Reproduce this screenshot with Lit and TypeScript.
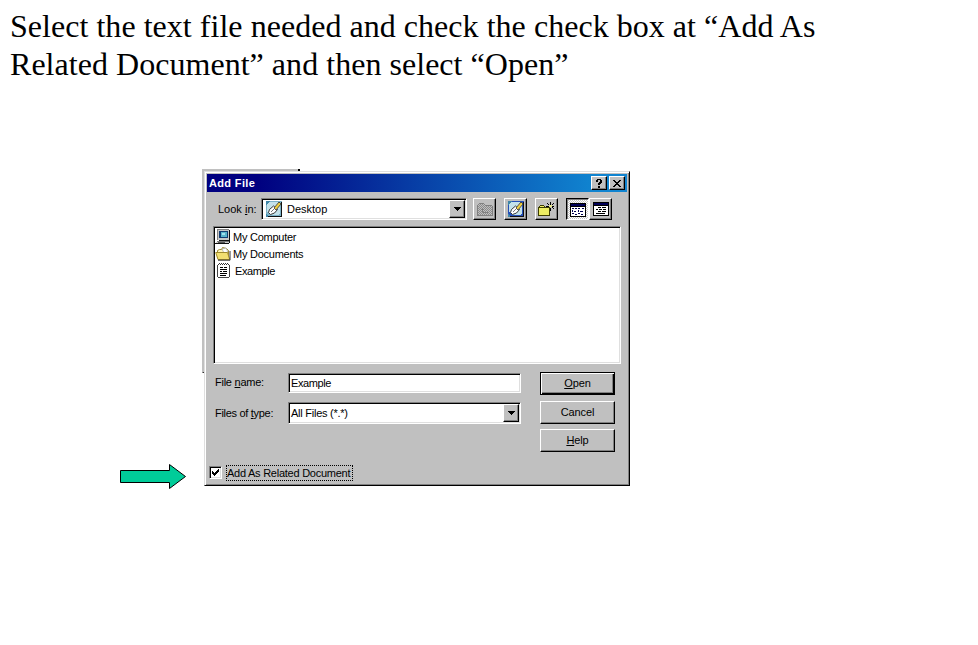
import { LitElement, html, css, svg } from "lit";
import { customElement } from "lit/decorators.js";

const icon = (w: number, h: number, body: unknown) =>
  html`<svg width=${w} height=${h} viewBox="0 0 ${w} ${h}" shape-rendering="crispEdges">${body}</svg>`;

const downArrow = () => icon(7, 4, svg`<path d="M0 0h7v1h-1v1h-1v1h-1v1h-1v-1h-1v-1h-1v-1h-1z"/>`);

const desktopIcon = (base: string) => icon(16, 16, svg`
  <rect width="16" height="16" fill=${base}/>
  <path d="M3 1h8l3 2v9l-2 2H4l-3-3V4z" fill="#c4e2ea"/>
  <path d="M0 0h4L0 4zM0 16v-3l3 3z" fill="#3f86a8"/>
  <g shape-rendering="auto">
    <path d="M2.5 11.5l1-3 4-3.500 4 3.500-3 3.500-4 1.500z" fill="#fff" stroke="#222" stroke-width=".9"/>
    <path d="M8 7l5-6 2 2-5 6z" fill="#f0d040" stroke="#333" stroke-width=".8"/>
    <path d="M5 11l4-4" stroke="#555" stroke-width=".8"/>
  </g>
  <path d="M15 1h1v15H2v-1h13z" fill="#111"/>`);

const computerIcon = () => icon(16, 16, svg`
  <path d="M2 0h12v11H2z" fill="#c8c8c8"/><path d="M14 1h1v11H4v-1h10z" fill="#111"/>
  <path d="M2 0h12v1H3v10H2z" fill="#808080"/>
  <path d="M4 2h9v7H4z" fill="#123b70"/><path d="M6 3h6v5H6z" fill="#58b4cc"/><path d="M7 4h3v2H7z" fill="#a4e0ee"/>
  <path d="M2 12h12v2H1v-1h1z" fill="#d0d0d0"/><path d="M2 12h12v1H2z" fill="#777"/>
  <path d="M0 14h14v1H0zM14 12h1v2h-1z" fill="#111"/><path d="M3 13h7v1H3z" fill="#555"/>`);

const folderIcon = () => icon(16, 16, svg`<g shape-rendering="auto">
  <path d="M2.500 12V4.500l2-1h2l1-2 4 1 2 2V12z" fill="#fff6b8" stroke="#9b8730"/>
  <path d="M7 3l4-1 2 4-4 1z" fill="#fff" stroke="#999" stroke-width=".6"/>
  <path d="M.7 6.500h11.800l2.200 7H3z" fill="#f2df70" stroke="#a18b2d"/>
  <path d="M3 14.200h12V5" fill="none" stroke="#333"/></g>`);

const noteIcon = () => icon(13, 16, svg`
  <path d="M1 2h11v12H1z" fill="#fff"/><path d="M0 2h1v12H0zM1 14h11v1H1zM12 2h1v12h-1z" fill="#444"/>
  <path d="M1 1h1v1H1zM3 1h1v1H3zM5 1h1v1H5zM7 1h1v1H7zM9 1h1v1H9zM11 1h1v1h-1zM2 0h1v1H2zM4 0h1v1H4zM6 0h1v1H6zM8 0h1v1H8zM10 0h1v1h-1z" fill="#333"/>
  <path d="M3 4h3v1H3zM7 4h3v1H7zM3 6h7v1H3zM3 8h2v1H3zM6 8h4v1H6zM3 10h7v1H3zM3 12h6v1H3z"/>`);

const upIcon = () => icon(16, 13, svg`
  <defs><pattern id="d" width="2" height="2" patternUnits="userSpaceOnUse"><path d="M0 0h1v1H0zM1 1h1v1H1z" fill="#8a8a8a"/></pattern></defs>
  <path d="M1 2h1V1h5v1h1v1h7v9H1z" fill="url(#d)"/>
  <path d="M2 0h5v1H2zM1 1h1v1H1zM7 1h1v1H7zM8 2h7v1H8zM0 2h1v10H0zM15 3h1v9h-1zM0 12h16v1H0zM5 5h1v4H5zM4 6h3v1H4zM6 9h5v1H6z" fill="#808080"/>`);

const newFolderIcon = () => icon(17, 15, svg`
  <path d="M1 5h10v8H1z" fill="#eeee62"/><path d="M2 3h4v2H2z" fill="#eeee62"/>
  <path d="M2 3h4v1H2zM1 4h1v1H1zM6 4h1v1H6zM0 5h1v8H0zM1 5h10v1H1zM11 5h1v8h-1zM0 13h12v1H0z" fill="#3d3d00"/>
  <path d="M12 0h1v3h-1zM9 1h1v1H9zM10 2h1v1h-1zM14 2h1v1h-1zM15 1h1v1h-1zM8 4h3v1H8zM13 4h3v1h-3zM12 6h1v3h-1zM14 5h1v1h-1zM15 6h1v1h-1z"/>
  <path d="M11 3h3v2h-3z" fill="#e8e88a"/>`);

const listIcon = () => icon(16, 14, svg`
  <rect width="16" height="14"/><path d="M1 4h14v9H1z" fill="#fff"/><path d="M1 1h14v2H1z" fill="#000058"/>
  <path d="M2 5h2v1H2zM5 5h2v1H5zM8 5h2v1H8zM12 5h2v1h-2zM2 7h1v2H2zM4 8h2v1H4zM8 7h1v2H8zM10 8h3v1h-3zM2 10h2v1H2zM5 11h2v1H5zM8 10h2v1H8zM11 11h2v1h-2z" fill="#000050"/>`);

const detailsIcon = () => icon(16, 14, svg`
  <rect width="16" height="14"/><path d="M1 4h14v9H1z" fill="#fff"/><path d="M1 1h14v2H1z" fill="#000058"/>
  <path d="M5 5h3v1H5zM9 5h4v1H9zM3 7h2v1H3zM6 7h3v1H6zM10 7h3v1h-3zM5 9h3v1H5zM9 9h4v1H9zM3 11h9v1H3z"/>`);

@customElement("app-root")
export class AppRoot extends LitElement {
  static styles = css`
    :host { display: block; position: relative; width: 978px; height: 645px; overflow: hidden; background: #fff; color: #000;
      font: 11px/14px "Liberation Sans", Arial, sans-serif; letter-spacing: -0.25px; }
    * { box-sizing: border-box; }
    svg { display: block; flex: none; }
    u { text-underline-offset: 1px; }
    .heading { margin: 0; padding: 7px 0 0 10px; height: 171px; font: 32px/38px "Liberation Serif", "Times New Roman", serif; letter-spacing: 0.035px; white-space: nowrap; }
    .heading span { display: block; }
    .behind { position: absolute; left: 202px; top: 169px; width: 98px; height: 204px; border: solid #c0c0c0; border-width: 2px 0 0 2px; border-bottom: 1px solid #000; }
    .behind::after { content: ""; position: absolute; right: 0; top: -2px; width: 2px; height: 2px; background: #000; }
    .dialog { position: relative; margin-left: 204px; width: 426px; height: 315px; padding: 2px; background: #c0c0c0;
      border: 1px solid; border-color: #dfdfdf #000 #000 #dfdfdf; box-shadow: inset 1px 1px #fff, inset -1px -1px #808080; }
    .title { display: flex; align-items: center; height: 18px; padding: 0 2px; gap: 2px; color: #fff;
      font-weight: bold; letter-spacing: 0.35px; background: linear-gradient(90deg, #000080 12%, #1084d0 92%); }
    .title .name { flex: 1; }
    .raised { display: flex; align-items: center; justify-content: center; background: #c0c0c0; border: 1px solid; border-color: #fff #000 #000 #fff; box-shadow: inset -1px -1px #808080; }
    .tb { width: 16px; height: 14px; color: #000; }
    .field { display: flex; align-items: center; background: #fff; border: 1px solid; border-color: #808080 #fff #fff #808080; box-shadow: inset 1px 1px #000, inset -1px -1px #dfdfdf; }
    .drop { margin-left: auto; width: 16px; height: 18px; }
    .look { display: flex; align-items: center; height: 22px; margin: 6px 0 0 11px; }
    .look .label { width: 43px; letter-spacing: 0; }
    .look .field { width: 206px; height: 22px; padding: 0 1px 0 4px; gap: 5px; letter-spacing: 0; }
    .tool { width: 23px; height: 22px; margin-left: 8px; }
    .look .first { margin-left: 6px; }
    .look .last { margin-left: 0; }
    .pressed { border-color: #000 #fff #fff #000; box-shadow: inset 1px 1px #808080; background: repeating-conic-gradient(#fff 0 25%, #c8c8c8 0 50%) 0 0 / 2px 2px; padding: 2px 0 0 1px; }
    .list { display: block; margin: 6px 0 0 6px; width: 408px; height: 138px; padding: 1px; }
    .item { display: flex; align-items: center; height: 17px; gap: 2px; }
    .item.note { gap: 5px; padding-left: 2px; letter-spacing: -0.4px; }
    .form { display: flex; margin: 8px 0 0 8px; height: 93px; }
    .fields { width: 325px; padding-top: 1px; }
    .row { display: flex; align-items: center; }
    .row .label { width: 73px; padding-bottom: 2px; }
    .row .field { width: 233px; height: 20px; padding: 0 1px 0 2px; }
    .row .name { letter-spacing: -0.4px; }
    .row.type { margin-top: 9px; }
    .row.type .label { padding: 0; letter-spacing: -0.3px; }
    .row.type .field { height: 22px; }
    .row.type .drop { height: 18px; }
    .buttons { display: flex; flex-direction: column; letter-spacing: -0.1px; }
    .btn { width: 75px; height: 23px; padding-bottom: 1px; margin-bottom: 5px; }
    .btn.default { border: 1px solid #000; margin-bottom: 6px; box-shadow: inset 1px 1px #fff, inset -1px -1px #000, inset -2px -2px #808080; padding: 0 0 2px; }
    .related { display: flex; align-items: center; height: 16px; margin-left: 2px; gap: 4px; }
    .box { justify-content: center; width: 13px; height: 13px; margin-bottom: 2px; }
    .focus { width: 127px; height: 16px; border: 1px dotted #000; line-height: 15px; white-space: nowrap; }
    .arrow { position: absolute; left: 119px; top: 463px; }
  `;

  render() {
    return html`
      <h1 class="heading"><span>Select the text file needed and check the check box at “Add As</span><span>Related Document” and then select “Open”</span></h1>
      <div class="behind"></div>
      <div class="dialog">
        <div class="title">
          <span class="name">Add File</span>
          <div class="raised tb">${icon(6, 9, svg`<path d="M1 0h4v1h1v3h-1v1h-1v1h-2v-2h1v-1h1v-2h-2v2h-2v-2h1zM2 7h2v2h-2z"/>`)}</div>
          <div class="raised tb">${icon(8, 7, svg`<path d="M0 0h2v1h1v1h2v-1h1v-1h2v1h-1v1h-1v1h-1v1h1v1h1v1h1v1h-2v-1h-1v-1h-2v1h-1v1h-2v-1h1v-1h1v-1h1v-1h-1v-1h-1v-1h-1z"/>`)}</div>
        </div>
        <div class="look">
          <span class="label">Look <u>i</u>n:</span>
          <div class="field">${desktopIcon("#7cb2c8")}<span>Desktop</span><div class="raised drop">${downArrow()}</div></div>
          <div class="raised tool first">${upIcon()}</div>
          <div class="raised tool">${desktopIcon("#244fb8")}</div>
          <div class="raised tool">${newFolderIcon()}</div>
          <div class="raised tool pressed">${listIcon()}</div>
          <div class="raised tool last">${detailsIcon()}</div>
        </div>
        <div class="field list">
          <div class="item">${computerIcon()}<span>My Computer</span></div>
          <div class="item">${folderIcon()}<span>My Documents</span></div>
          <div class="item note">${noteIcon()}<span>Example</span></div>
        </div>
        <div class="form">
          <div class="fields">
            <div class="row"><span class="label">File <u>n</u>ame:</span><div class="field name">Example</div></div>
            <div class="row type"><span class="label">Files of <u>t</u>ype:</span><div class="field"><span>All Files (*.*)</span><div class="raised drop">${downArrow()}</div></div></div>
          </div>
          <div class="buttons">
            <div class="raised btn default"><span><u>O</u>pen</span></div>
            <div class="raised btn"><span>Cancel</span></div>
            <div class="raised btn"><span><u>H</u>elp</span></div>
          </div>
        </div>
        <div class="related">
          <div class="field box">${icon(7, 7, svg`<path d="M0 2h1v1h1v1h1v-1h1v-1h1v-1h1v-1h1v3h-1v1h-1v1h-1v1h-1v1h-1v-1h-1v-1h-1z"/>`)}</div>
          <span class="focus">Add As Related Document</span>
        </div>
      </div>
      <div class="arrow"><svg width="69" height="27" viewBox="0 0 69 27"><path d="M1.5 7.5h49V1.5l16 12-16 12v-6h-49z" fill="#00cc99" stroke="#000"/></svg></div>
    `;
  }
}
